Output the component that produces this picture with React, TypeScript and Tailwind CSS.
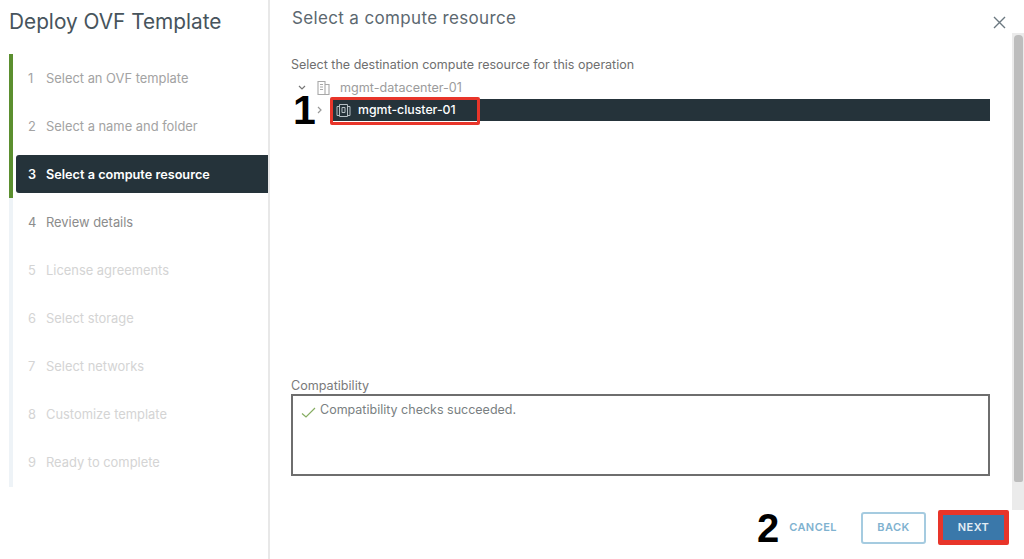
import React from 'react';

const steps = [
  { n: 1, label: 'Select an OVF template', tone: 'done' },
  { n: 2, label: 'Select a name and folder', tone: 'done' },
  { n: 3, label: 'Select a compute resource', tone: 'active' },
  { n: 4, label: 'Review details', tone: 'next' },
  { n: 5, label: 'License agreements', tone: 'off' },
  { n: 6, label: 'Select storage', tone: 'off' },
  { n: 7, label: 'Select networks', tone: 'off' },
  { n: 8, label: 'Customize template', tone: 'off' },
  { n: 9, label: 'Ready to complete', tone: 'off' },
];

function Step({ n, label, tone }: { n: number; label: string; tone: string }) {
  const color =
    tone === 'active'
      ? 'bg-[#25333a] text-white font-semibold text-[12.7px] rounded-l-[3px]'
      : tone === 'off'
        ? 'text-[#d4d4d4] text-[12.9px]'
        : tone === 'next'
          ? 'text-[#8c8c8c] text-[12.9px]'
          : 'text-[#a3a3a3] text-[12.9px]';
  return (
    <div className="h-[48px] flex items-center">
      <div className={`h-[38px] w-full flex items-center pl-[12px] pt-[2px] ${color}`}>
        <span className="w-[18px]">{n}</span>
        <span>{label}</span>
      </div>
    </div>
  );
}

function DatacenterIcon() {
  return (
    <svg width="13" height="14" viewBox="0 0 13 14" fill="none" stroke="#a8a8a8" strokeWidth="1.1">
      <path d="M1 .5h7v13H1zM8 3.5h4v10H8z" />
      <path d="M3 3.5h3M3 6h3M3 8.5h3" />
    </svg>
  );
}

function ClusterIcon() {
  return (
    <svg width="15" height="15" viewBox="0 0 15 15" fill="none" stroke="#b4bec3" strokeWidth="1">
      <path d="M3.5 1.5h8v12h-8zM3.5 3.5H1v9h2.5M11.5 3.5H14v9h-2.5" />
      <path d="M6 4.5h3v5H6z" />
    </svg>
  );
}

export default function App() {
  return (
    <div className="w-[1024px] h-[559px] flex bg-white overflow-hidden relative font-['Inter',sans-serif]">
      <aside className="w-[270px] shrink-0 border-r-2 border-[#e8e8e8] pl-[9px]">
        <h1 className="text-[20.8px] leading-[24px] text-[#47545c] mt-[10px] mb-[20px]">Deploy OVF Template</h1>
        <div className="flex">
          <div className="w-[4px] shrink-0 flex flex-col">
            <div className="h-[144px] bg-[#5b8f2f]" />
            <div className="h-[289px] bg-[#eef3f7]" />
          </div>
          <div className="flex-1 ml-[3px]">
            {steps.map((s) => (
              <Step key={s.n} {...s} />
            ))}
          </div>
        </div>
      </aside>

      <main className="flex-1 flex flex-col min-w-0">
        <header className="h-[33px] flex items-start justify-between pl-[22px] pr-[18px] shrink-0">
          <h2 className="text-[17px] leading-[20px] mt-[8px] tracking-[0.35px] text-[#5c6870]">Select a compute resource</h2>
          <svg className="mt-[16px]" width="13" height="13" viewBox="0 0 13 13" stroke="#6b7880" strokeWidth="1.4">
            <path d="M1 1l11 11M12 1L1 12" />
          </svg>
        </header>

        <div className="flex-1 flex min-h-0">
          <div className="flex-1 flex flex-col pl-[21px] pr-[22px] pb-[34px]">
            <p className="mt-[24px] text-[12.5px] leading-[16px] text-[#6f6f6f]">Select the destination compute resource for this operation</p>
            <div className="mt-[5px] h-[20px] flex items-center text-[12.6px] text-[#9c9c9c]">
              <svg className="ml-[7px] mr-[11px]" width="8" height="6" viewBox="0 0 8 6" fill="none" stroke="#777" strokeWidth="1.2">
                <path d="M1 1l3 3 3-3" />
              </svg>
              <DatacenterIcon />
              <span className="ml-[10px]">mgmt-datacenter-01</span>
            </div>
            <div className="mt-[1px] flex items-center h-[22px]">
              <svg className="ml-[26px] mr-[7px]" width="6" height="8" viewBox="0 0 6 8" fill="none" stroke="#999" strokeWidth="1.2">
                <path d="M1 1l3 3-3 3" />
              </svg>
              <div className="flex-1 h-full bg-[#25333a] flex items-center pl-[6px] text-[12.3px] font-medium text-white">
                <ClusterIcon />
                <span className="ml-[7px]">mgmt-cluster-01</span>
              </div>
            </div>

            <div className="mt-auto">
              <div className="text-[12.6px] leading-[16px] text-[#7a7a7a]">Compatibility</div>
              <div className="h-[82px] border-2 border-[#6e6e6e] pl-[8px] pt-[6px] flex items-start">
                <svg className="mt-[5px]" width="15" height="11" viewBox="0 0 15 11" fill="none" stroke="#86ad62" strokeWidth="1.2">
                  <path d="M1 6.5L5 10 14 1" />
                </svg>
                <span className="ml-[4px] text-[12.5px] leading-[16px] text-[#7a7f82]">Compatibility checks succeeded.</span>
              </div>
            </div>
          </div>
          <div className="w-[12px] shrink-0 bg-[#ebebeb] pt-[2px] pl-[2px] pr-[1px]">
            <div className="h-[447px] bg-[#bdbdbd] rounded-t-[4px] rounded-b-[2px]" />
          </div>
        </div>

        <footer className="h-[49px] shrink-0 flex items-center justify-end pr-[15px] pb-[14px] text-[11px] font-semibold tracking-[0.45px]">
          <button className="text-[#7fb2d0] mr-[24px]">CANCEL</button>
          <button className="w-[65px] h-[32px] border-2 border-[#a5cbe0] rounded-[3px] text-[#7fb2d0] mr-[12px]">BACK</button>
          <button className="w-[71px] h-[35px] border-[5px] border-[#e8352a] rounded-[2px] bg-[#3a78aa] text-[#e3edf4]">NEXT</button>
        </footer>
      </main>

      {/* annotations drawn on top of the screenshot */}
      <div className="absolute left-[330px] top-[97px] w-[150px] h-[28px] border-[3px] border-[#e8352a] rounded-[2px]" />
      <span className="absolute left-[293px] top-[86px] text-[41px] leading-[48px] font-bold text-black font-['Liberation_Sans',sans-serif]">1</span>
      <span className="absolute left-[757px] top-[504px] text-[40px] leading-[48px] font-bold text-black font-['Liberation_Sans',sans-serif]">2</span>
    </div>
  );
}
